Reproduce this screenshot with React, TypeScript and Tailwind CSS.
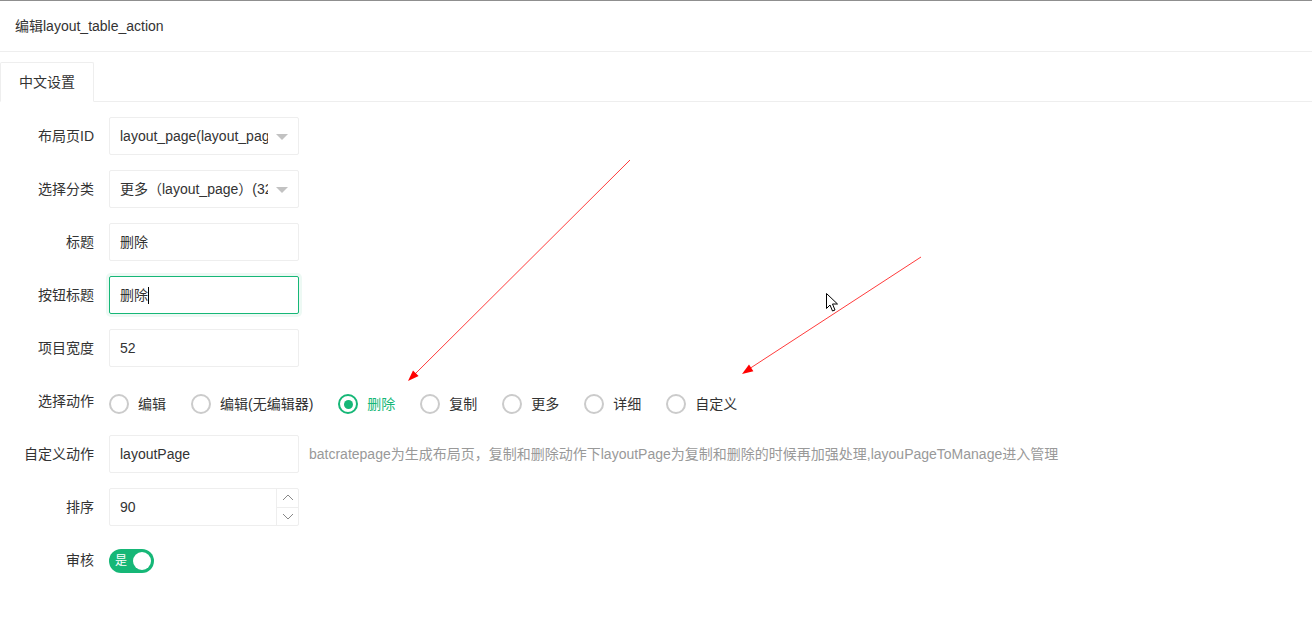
import React from 'react';

const font = { fontFamily: '"Liberation Sans", "Noto Sans CJK SC", sans-serif' };

const actions = ['编辑', '编辑(无编辑器)', '删除', '复制', '更多', '详细', '自定义'];

const Label: React.FC<{ text: string }> = ({ text }) => (
  <label className="w-[109px] shrink-0 pr-[15px] py-[9px] text-right text-[14px] leading-[20px] text-[#333]">
    {text}
  </label>
);

const SelectBox: React.FC<{ value: string }> = ({ value }) => (
  <div className="relative w-[190px] h-[38px] border border-[#eee] rounded-[2px] bg-white">
    <div className="h-full pl-[10px] pr-[30px]">
      <div className="w-full h-full overflow-hidden whitespace-nowrap text-[14px] leading-[36px] text-[#333]">
        {value}
      </div>
    </div>
    <span className="absolute right-[10px] top-[16px] w-0 h-0 border-l-[6px] border-r-[6px] border-t-[6px] border-l-transparent border-r-transparent border-t-[#c2c2c2]" />
  </div>
);

const TextInput: React.FC<{ value: string; focused?: boolean }> = ({ value, focused }) => (
  <div
    className={
      focused
        ? 'w-[190px] h-[38px] border border-[#16b777] rounded-[2px] bg-white shadow-[0_0_0_3px_rgba(22,183,119,0.08)]'
        : 'w-[190px] h-[38px] border border-[#eee] rounded-[2px] bg-white'
    }
  >
    <div className="flex items-center h-full pl-[10px] text-[14px] text-[#333]">
      {value}
      {focused && <span className="inline-block w-px h-[17px] bg-black" />}
    </div>
  </div>
);

const Radio: React.FC<{ text: string; checked?: boolean }> = ({ text, checked }) => (
  <div className="flex items-center h-[28px] mr-[25px]">
    <span
      className={
        checked
          ? 'flex items-center justify-center w-[20px] h-[20px] rounded-full border-2 border-[#16b777]'
          : 'w-[20px] h-[20px] rounded-full border-2 border-[#cbcbcb]'
      }
    >
      {checked && <span className="w-[9px] h-[9px] rounded-full bg-[#16b777]" />}
    </span>
    <span className={checked ? 'ml-[9px] text-[14px] text-[#16b777]' : 'ml-[9px] text-[14px] text-[#333]'}>
      {text}
    </span>
  </div>
);

const NumberInput: React.FC<{ value: string }> = ({ value }) => (
  <div className="flex w-[190px] h-[38px] border border-[#eee] rounded-[2px] bg-white">
    <div className="flex-1 pl-[10px] text-[14px] leading-[36px] text-[#333]">{value}</div>
    <div className="flex flex-col w-[22px] border-l border-[#eee]">
      <div className="flex-1 flex items-center justify-center border-b border-[#eee]">
        <svg width="12" height="7" viewBox="0 0 12 7">
          <polyline points="1,6 6,1 11,6" fill="none" stroke="#888" strokeWidth="1" />
        </svg>
      </div>
      <div className="flex-1 flex items-center justify-center">
        <svg width="12" height="7" viewBox="0 0 12 7">
          <polyline points="1,1 6,6 11,1" fill="none" stroke="#888" strokeWidth="1" />
        </svg>
      </div>
    </div>
  </div>
);

const Overlay: React.FC = () => (
  <svg className="absolute left-0 top-0 pointer-events-none" width="1312" height="617">
    <line x1="630" y1="160" x2="414" y2="375" stroke="#ff3b3b" strokeWidth="1" />
    <polygon points="408,381 418.6,376 413,370.4" fill="#ff0000" />
    <line x1="921" y1="257" x2="749" y2="369" stroke="#ff3b3b" strokeWidth="1" />
    <polygon points="742,374 753.4,371.3 749,364.6" fill="#ff0000" />
    <g transform="translate(826.5,293.5)">
      <path d="M0 0 L0 15 L3.5 11.5 L6 17.5 L8.5 16.5 L6 10.5 L11 10.5 Z" fill="#fff" stroke="#000" strokeWidth="1" strokeLinejoin="miter" />
    </g>
  </svg>
);

const App: React.FC = () => {
  return (
    <div className="relative w-full h-[617px] bg-white overflow-hidden" style={font}>
      <div className="h-[52px] border-t border-[#8f8f8f] border-b border-b-[#eee] px-[15px] flex items-center text-[14px] text-[#333]">
        编辑layout_table_action
      </div>

      <div className="mt-[10px]">
        <div className="flex border-b border-[#eee]">
          <div className="h-[40px] w-[94px] -mb-px flex items-center justify-center border border-[#eee] border-b-white bg-white rounded-t-[2px] text-[14px] text-[#333]">
            中文设置
          </div>
        </div>

        <div className="pt-[15px]">
          <div className="flex mb-[15px]">
            <Label text="布局页ID" />
            <SelectBox value="layout_page(layout_page)" />
          </div>
          <div className="flex mb-[15px]">
            <Label text="选择分类" />
            <SelectBox value="更多（layout_page）(32)" />
          </div>
          <div className="flex mb-[15px]">
            <Label text="标题" />
            <TextInput value="删除" />
          </div>
          <div className="flex mb-[15px]">
            <Label text="按钮标题" />
            <TextInput value="删除" focused />
          </div>
          <div className="flex mb-[15px]">
            <Label text="项目宽度" />
            <TextInput value="52" />
          </div>
          <div className="flex mb-[15px] h-[38px]">
            <Label text="选择动作" />
            <div className="flex mt-[8px] h-[28px]">
              {actions.map((a) => (
                <Radio key={a} text={a} checked={a === '删除'} />
              ))}
            </div>
          </div>
          <div className="flex mb-[15px]">
            <Label text="自定义动作" />
            <TextInput value="layoutPage" />
            <div className="ml-[10px] py-[9px] text-[14px] leading-[20px] text-[#999] whitespace-nowrap">
              batcratepage为生成布局页，复制和删除动作下layoutPage为复制和删除的时候再加强处理,layouPageToManage进入管理
            </div>
          </div>
          <div className="flex mb-[15px]">
            <Label text="排序" />
            <NumberInput value="90" />
          </div>
          <div className="flex mb-[15px]">
            <Label text="审核" />
            <div className="mt-[8px] flex items-center w-[45px] h-[24px] rounded-full bg-[#16b777] pl-[6px] pr-[3px]">
              <span className="text-[12px] text-white leading-none">是</span>
              <span className="ml-auto w-[18px] h-[18px] rounded-full bg-white" />
            </div>
          </div>
        </div>
      </div>

      <Overlay />
    </div>
  );
};

export default App;
